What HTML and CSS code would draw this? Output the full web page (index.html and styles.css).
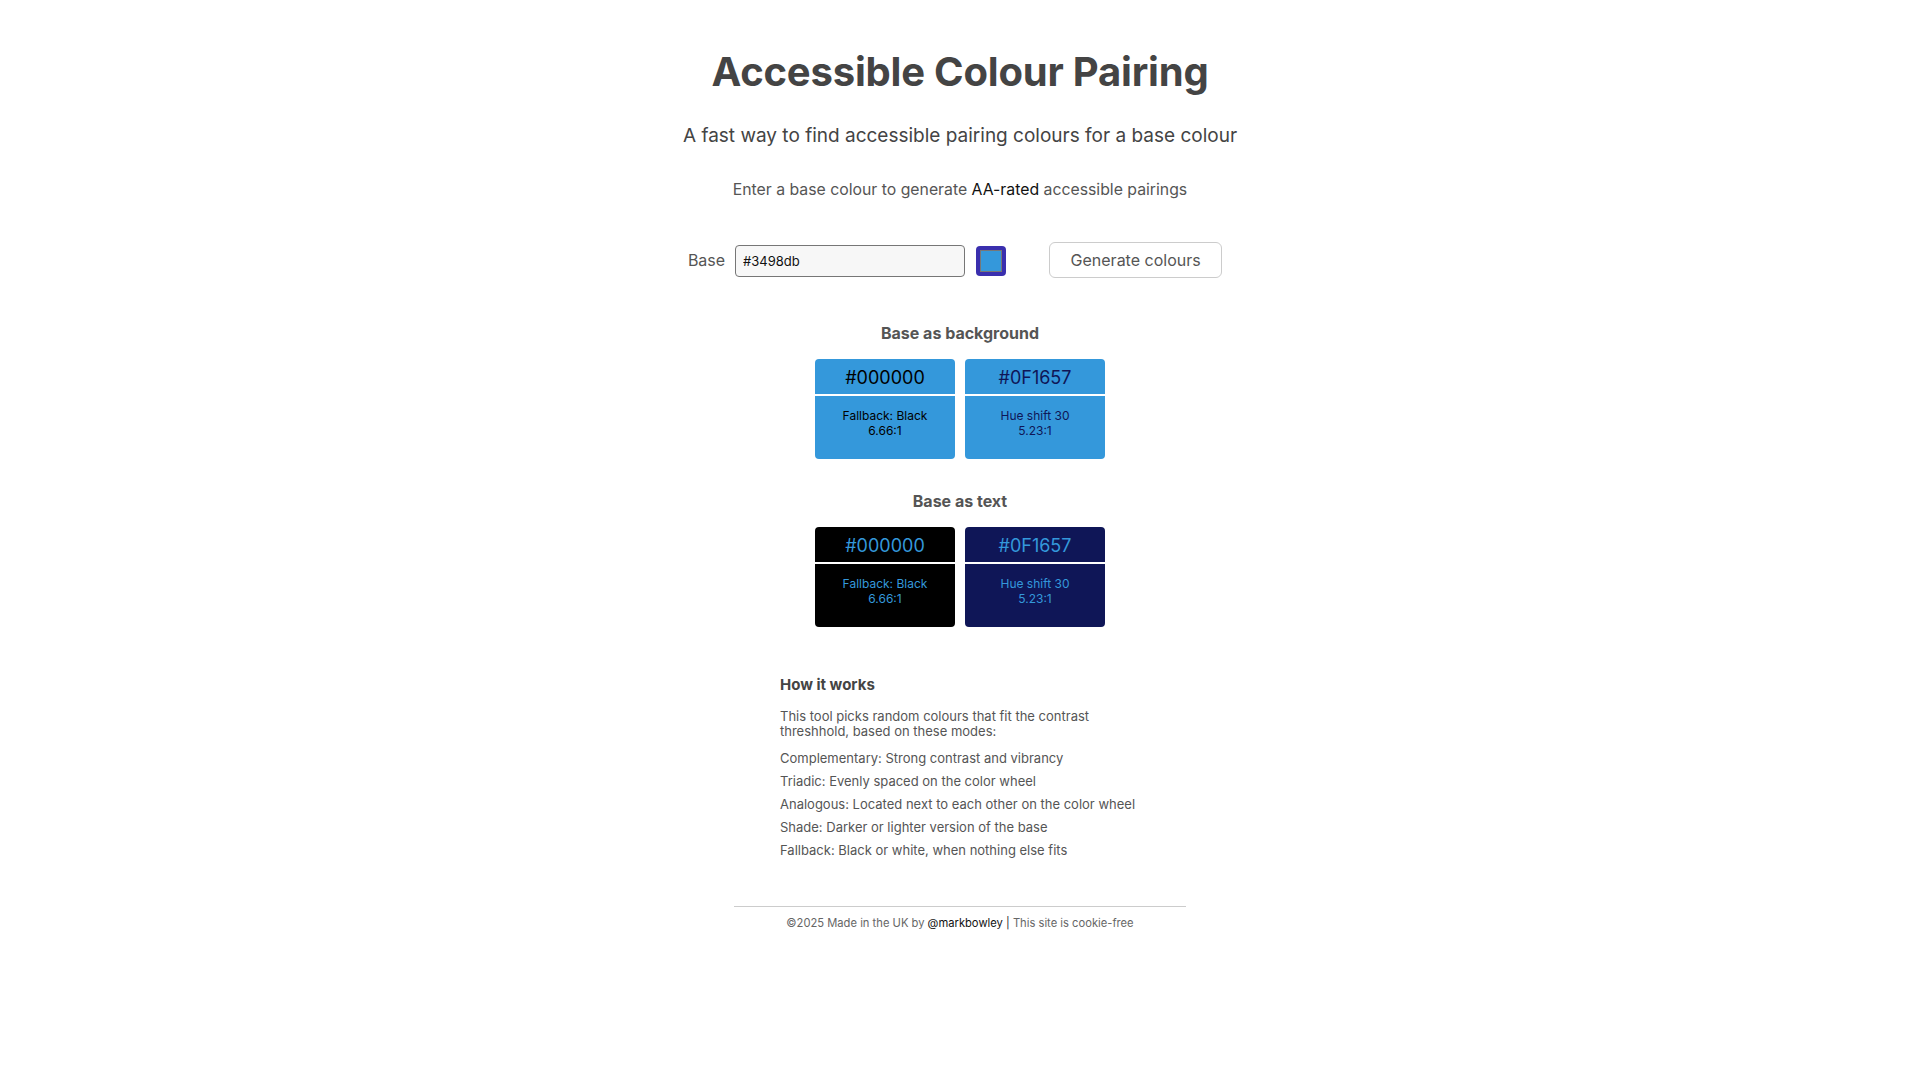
FILE: index.html
```html
<!DOCTYPE html>
<html lang="en">
<head>
<meta charset="utf-8">
<title>Accessible Colour Pairing</title>
<link rel="stylesheet" href="styles.css">
</head>
<body>
<main class="page">
  <h1 class="title">Accessible Colour Pairing</h1>
  <p class="subtitle">A fast way to find accessible pairing colours for a base colour</p>
  <p class="intro">Enter a base colour to generate <strong class="em">AA-rated</strong> accessible pairings</p>

  <form class="form-row">
    <label class="base-label" for="base">Base</label>
    <input class="base-input" id="base" type="text" value="#3498db">
    <span class="swatch"><span class="swatch-inner"></span></span>
    <button class="gen-btn" type="button">Generate colours</button>
  </form>

  <h2 class="section-title">Base as background</h2>
  <div class="cards">
    <div class="card card-bg-blue">
      <div class="card-hex c-black">#000000</div>
      <div class="card-info c-black">Fallback: Black<br>6.66:1</div>
    </div>
    <div class="card card-bg-blue">
      <div class="card-hex c-navy">#0F1657</div>
      <div class="card-info c-navy">Hue shift 30<br>5.23:1</div>
    </div>
  </div>

  <h2 class="section-title section-title-2">Base as text</h2>
  <div class="cards">
    <div class="card card-bg-black">
      <div class="card-hex c-blue">#000000</div>
      <div class="card-info c-blue">Fallback: Black<br>6.66:1</div>
    </div>
    <div class="card card-bg-navy">
      <div class="card-hex c-blue">#0F1657</div>
      <div class="card-info c-blue">Hue shift 30<br>5.23:1</div>
    </div>
  </div>

  <section class="how">
    <h3 class="how-title">How it works</h3>
    <p class="how-text">This tool picks random colours that fit the contrast threshhold, based on these modes:</p>
    <ul class="modes">
      <li>Complementary: Strong contrast and vibrancy</li>
      <li>Triadic: Evenly spaced on the color wheel</li>
      <li>Analogous: Located next to each other on the color wheel</li>
      <li>Shade: Darker or lighter version of the base</li>
      <li>Fallback: Black or white, when nothing else fits</li>
    </ul>
  </section>

  <footer class="footer">
    <p class="footer-text">©2025 Made in the UK by <a class="footer-link" href="#">@markbowley</a> <span class="sep">|</span> This site is cookie-free</p>
  </footer>
</main>
</body>
</html>
```

FILE: styles.css
```css
html, body {
  margin: 0;
  padding: 0;
  background: #ffffff;
}

body {
  font-family: Inter, "Noto Sans", "Liberation Sans", sans-serif;
  color: #555;
}

.page {
  display: flex;
  flex-direction: column;
  align-items: center;
}

.title {
  margin: 48px 0 0;
  font-size: 40px;
  line-height: 48px;
  font-weight: 700;
  color: #444;
  letter-spacing: -0.2px;
}

.subtitle {
  margin: 26px 0 0;
  font-size: 19px;
  line-height: 28px;
  font-weight: 400;
  color: #444;
}

.intro {
  margin: 28px 0 0;
  font-size: 15.8px;
  line-height: 24px;
  color: #555;
}

.em {
  font-weight: 400;
  color: #111;
}

.form-row {
  margin: 40px 0 0;
  padding-right: 10px;
  display: flex;
  align-items: center;
  height: 36px;
}

.base-label {
  font-size: 16px;
  color: #555;
  margin-right: 10px;
}

.base-input {
  box-sizing: border-box;
  width: 230px;
  height: 32px;
  margin-top: 2px;
  padding: 0 7px;
  font-family: Inter, "Noto Sans", sans-serif;
  font-size: 13px;
  color: #111;
  background: #f7f7f7;
  border: 1px solid #767676;
  border-radius: 4px;
}

.swatch {
  box-sizing: border-box;
  margin-left: 11px;
  margin-top: 2px;
  width: 30px;
  height: 30px;
  padding: 4px 4px;
  background: #3a2fae;
  border-radius: 4px;
  display: flex;
}

.swatch-inner {
  flex: 1;
  background: #3498db;
  border: 1px solid #777;
}

.gen-btn {
  box-sizing: border-box;
  margin-left: 43px;
  width: 173px;
  height: 36px;
  font-family: Inter, "Noto Sans", sans-serif;
  font-size: 16px;
  color: #555;
  background: #fff;
  border: 1px solid #ccc;
  border-radius: 6px;
}

.section-title {
  margin: 43px 0 0;
  font-size: 16px;
  line-height: 24px;
  font-weight: 700;
  color: #555;
}

.section-title-2 {
  margin-top: 30px;
}

.cards {
  margin-top: 14px;
  display: flex;
  gap: 10px;
}

.card {
  width: 140px;
  height: 100px;
  border-radius: 4px;
  display: flex;
  flex-direction: column;
  text-align: center;
  overflow: hidden;
}

.card-bg-blue { background: #3498db; }
.card-bg-black { background: #000000; }
.card-bg-navy { background: #0f1657; }

.c-black { color: #000; }
.c-navy { color: #0f1657; }
.c-blue { color: #3498db; }

.card-hex {
  box-sizing: border-box;
  height: 37px;
  padding-top: 3px;
  line-height: 32px;
  font-size: 18px;
  border-bottom: 2px solid #fff;
}

.card-info {
  padding-top: 12px;
  font-size: 12px;
  line-height: 15px;
}

.how {
  margin-top: 48px;
  width: 360px;
}

.how-title {
  margin: 0;
  font-size: 15px;
  line-height: 20px;
  font-weight: 700;
  color: #444;
}

.how-text {
  margin: 14px 0 0;
  font-size: 13px;
  line-height: 15px;
  color: #555;
}

.modes {
  margin: 8px 0 0;
  padding: 0;
  list-style: none;
  font-size: 13px;
  line-height: 23px;
  color: #555;
}

.footer {
  margin-top: 44px;
  width: 452px;
  border-top: 1px solid #ccc;
  text-align: center;
}

.footer-text {
  margin: 8px 0 0;
  font-size: 11.2px;
  line-height: 16px;
  color: #666;
}

.footer-link {
  color: #111;
  text-decoration: none;
}

.sep {
  color: #333;
}
```
